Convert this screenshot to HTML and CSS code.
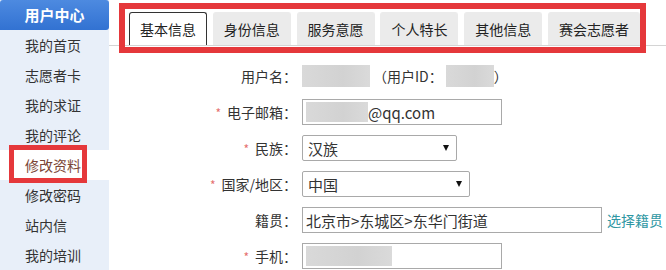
FILE: index.html
```html
<!DOCTYPE html>
<html lang="zh-CN">
<head>
  <meta charset="UTF-8">
  <meta name="viewport" content="width=device-width, initial-scale=1.0">
  <title>用户中心 - 修改资料</title>
  <link rel="stylesheet" href="styles.css">
</head>
<body>
  <div class="page">
    <aside class="side">
      <div class="side-title">用户中心</div>
      <ul class="side-menu">
        <li>我的首页</li>
        <li>志愿者卡</li>
        <li>我的求证</li>
        <li>我的评论</li>
        <li class="current">修改资料</li>
        <li>修改密码</li>
        <li>站内信</li>
        <li>我的培训</li>
      </ul>
    </aside>

    <main class="main">
      <div class="tabbar">
        <ul class="tabs">
          <li class="tab active">基本信息</li>
          <li class="tab">身份信息</li>
          <li class="tab">服务意愿</li>
          <li class="tab">个人特长</li>
          <li class="tab">其他信息</li>
          <li class="tab">赛会志愿者</li>
        </ul>
      </div>

      <form class="info-form">
        <label class="lbl">用户名：</label>
        <div class="fld">
          <span class="blur blur-name"></span>
          <span class="uid">（用户ID：</span>
          <span class="blur blur-id"></span>
          <span>）</span>
        </div>

        <label class="lbl"><span class="req">*</span>电子邮箱：</label>
        <div class="fld">
          <div class="box box-mid"><span class="blur blur-mail"></span>@qq.com</div>
        </div>

        <label class="lbl"><span class="req">*</span>民族：</label>
        <div class="fld">
          <div class="box select select-nation">汉族<span class="arrow"></span></div>
        </div>

        <label class="lbl"><span class="req">*</span>国家/地区：</label>
        <div class="fld">
          <div class="box select select-country">中国<span class="arrow"></span></div>
        </div>

        <label class="lbl">籍贯：</label>
        <div class="fld">
          <div class="box box-wide">北京市&gt;东城区&gt;东华门街道</div>
          <a class="link" href="#">选择籍贯</a>
        </div>

        <label class="lbl"><span class="req">*</span>手机：</label>
        <div class="fld">
          <div class="box box-mid"><span class="blur blur-phone"></span></div>
        </div>
      </form>
    </main>
  </div>
</body>
</html>
```

FILE: styles.css
```css
/* 用户中心 - 修改资料 */
body {
  margin: 0;
  padding: 0;
  background-color: #fff;
  font-family: "Noto Sans CJK SC", "Liberation Sans", sans-serif;
  color: #333;
  overflow: hidden;
}

.page {
  display: flex;
  height: 270px;
}

/* sidebar */
.side {
  width: 109px;
  flex-shrink: 0;
  background-color: #e8eff9;
}

.side-title {
  height: 30px;
  line-height: 30px;
  text-align: center;
  font-size: 15px;
  font-weight: bold;
  color: #fff;
  background: linear-gradient(#4d8ae0, #3272d2);
  border-radius: 3px 3px 3px 0;
}

.side-menu {
  list-style: none;
  margin: 0;
  padding: 0;
}

.side-menu li {
  height: 30px;
  line-height: 30px;
  padding-left: 25px;
  font-size: 14px;
  color: #333;
}

.side-menu li.current {
  position: relative;
  background-color: #fff;
  color: #7b4636;
}

.side-menu li.current::after {
  content: "";
  position: absolute;
  left: 9px;
  top: -5px;
  width: 78px;
  height: 38px;
  box-sizing: border-box;
  border: 5px solid #e5383b;
}

/* main */
.main {
  flex: 1;
}

.tabbar {
  padding: 12px 0 0 20px;
  border-bottom: 1px solid #d4d4d4;
}

.tabs {
  position: relative;
  display: flex;
  justify-content: space-between;
  width: 511px;
  margin: 0;
  padding: 0;
  list-style: none;
}

.tabs::after {
  content: "";
  position: absolute;
  left: -10px;
  top: -9px;
  right: -6px;
  bottom: -8px;
  border: 6px solid #e5383b;
}

.tab {
  height: 33px;
  line-height: 33px;
  padding: 0 10px;
  font-size: 14px;
  color: #222;
  background-color: #ebebeb;
  border: 1px solid #ebebeb;
  border-bottom: none;
  border-radius: 3px 3px 0 0;
  box-sizing: border-box;
}

.tab.active {
  background-color: #fff;
  border-color: #333;
}

/* form */
.info-form {
  display: grid;
  grid-template-columns: 188px auto;
  grid-auto-rows: 36px;
  column-gap: 5px;
  align-items: center;
  padding-top: 12px;
  font-size: 14px;
}

.lbl {
  text-align: right;
  color: #333;
}

.req {
  color: #e57070;
  font-size: 12px;
  margin-right: 6px;
}

.fld {
  display: flex;
  align-items: center;
}

.blur {
  display: inline-block;
  height: 22px;
  background: linear-gradient(90deg, #d9d9d9, #d2d2d2 60%, #dadada);
}

.blur-name {
  width: 68px;
}

.uid {
  margin-left: 3px;
}

.blur-id {
  width: 48px;
  margin-left: 3px;
}

.box {
  display: flex;
  align-items: center;
  height: 26px;
  padding: 0 3px;
  box-sizing: border-box;
  border: 1px solid #a9a9a9;
  background-color: #fff;
  font-size: 15px;
  color: #333;
}

.box-mid {
  width: 200px;
}

.box-wide {
  width: 300px;
}

.blur-mail {
  width: 62px;
  height: 20px;
}

.blur-phone {
  width: 86px;
  height: 20px;
}

.select {
  position: relative;
  padding-left: 5px;
  border-radius: 2px;
}

.select-nation {
  width: 155px;
}

.select-country {
  width: 168px;
}

.arrow {
  position: absolute;
  right: 7px;
  top: 9px;
  border-left: 3px solid transparent;
  border-right: 3px solid transparent;
  border-top: 6px solid #111;
}

.link {
  margin-left: 5px;
  color: #2f97a3;
  text-decoration: none;
  font-size: 14px;
}
```
